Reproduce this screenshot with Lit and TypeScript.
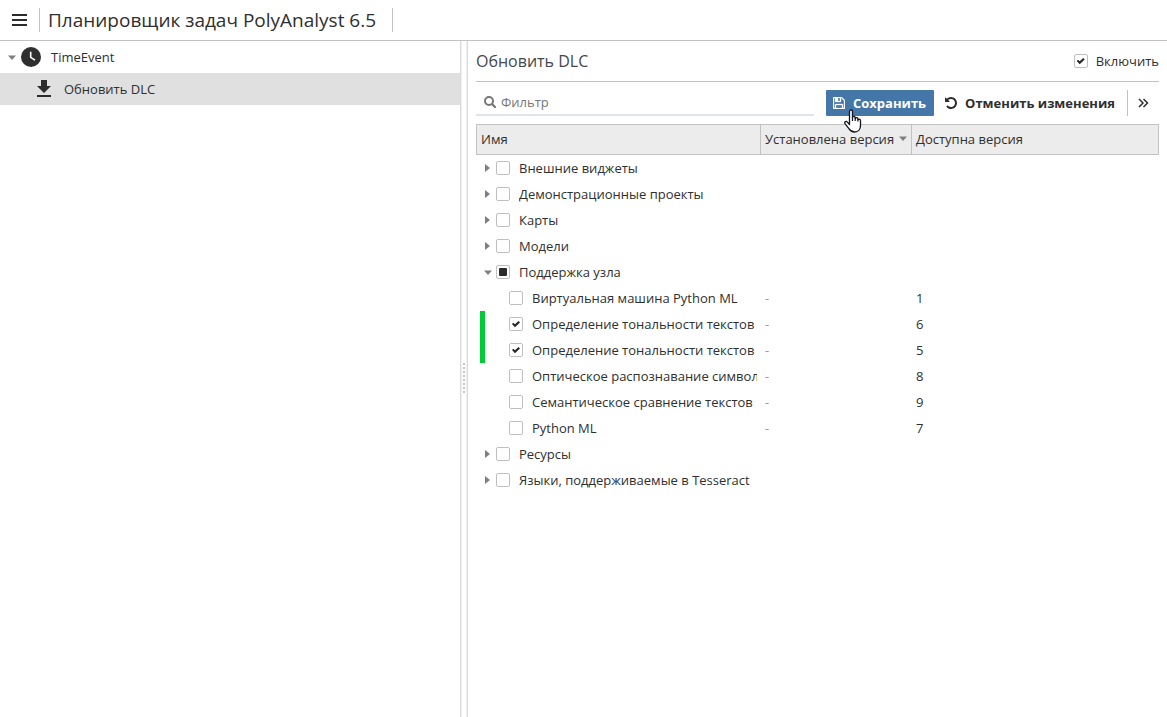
import { LitElement, css, html, svg, nothing } from "lit";
import { customElement, property, state } from "lit/decorators.js";

interface DlcRow {
  name: string;
  level: 0 | 1;
  open?: boolean;
  checked?: boolean;
  mixed?: boolean;
  changed?: boolean;
  available?: string;
}

const ROWS: DlcRow[] = [
  { name: "Внешние виджеты", level: 0 },
  { name: "Демонстрационные проекты", level: 0 },
  { name: "Карты", level: 0 },
  { name: "Модели", level: 0 },
  { name: "Поддержка узла", level: 0, open: true, mixed: true },
  { name: "Виртуальная машина Python ML", level: 1, available: "1" },
  { name: "Определение тональности текстов", level: 1, checked: true, changed: true, available: "6" },
  { name: "Определение тональности текстов", level: 1, checked: true, changed: true, available: "5" },
  { name: "Оптическое распознавание символов", level: 1, available: "8" },
  { name: "Семантическое сравнение текстов", level: 1, available: "9" },
  { name: "Python ML", level: 1, available: "7" },
  { name: "Ресурсы", level: 0 },
  { name: "Языки, поддерживаемые в Tesseract", level: 0 },
];

const shared = css`
  * {
    box-sizing: border-box;
  }
  button {
    font: inherit;
    color: inherit;
    background: none;
    border: 0;
    padding: 0;
    cursor: pointer;
  }
  svg {
    display: block;
    flex: none;
  }
  .check {
    appearance: none;
    flex: none;
    display: grid;
    place-items: center;
    width: 14px;
    height: 14px;
    margin: 0;
    border: 1px solid #bfbfbf;
    border-radius: 2px;
    background: #fff;
  }
  .check::before {
    content: "";
    width: 8px;
    height: 8px;
  }
  .check:checked::before {
    background: #262626;
    clip-path: polygon(0 50%, 16% 34%, 37% 53%, 82% 14%, 100% 31%, 37% 90%);
  }
  .check:indeterminate::before {
    background: #2b2b2b;
    border-radius: 1px;
  }
`;

/** Small grey triangle used by trees and the sort mark. */
const triangle = (open: boolean) =>
  open
    ? svg`<svg width="8" height="5" viewBox="0 0 8 5"><path d="M0 .5h8L4 5z" fill="#7d7f85"/></svg>`
    : svg`<svg width="5" height="8" viewBox="0 0 5 8"><path d="M0 0v8l5-4z" fill="#7d7f85"/></svg>`;

@customElement("dlc-table")
export class DlcTable extends LitElement {
  static styles = [
    shared,
    css`
      :host {
        display: block;
      }
      .table {
        width: 100%;
        border-collapse: separate;
        border-spacing: 0;
        table-layout: fixed;
      }
      .name-col {
        width: 285px;
      }
      .version-col {
        width: 151px;
      }
      .head {
        height: 31px;
        padding: 0 4px 2px;
        text-align: left;
        font-weight: 400;
        white-space: nowrap;
        background: #ececec;
        border: 1px solid #c2c2c2;
        border-left: 0;
      }
      .head:first-child {
        border-left: 1px solid #c2c2c2;
      }
      .head-label {
        display: flex;
        align-items: center;
        justify-content: space-between;
      }
      .cell {
        height: 26px;
        padding: 0 4px;
      }
      .none {
        color: #9a9a9a;
      }
      .item {
        display: flex;
        align-items: center;
        height: 26px;
        border-left: 5px solid transparent;
      }
      .item.changed {
        border-color: #00cc33;
      }
      .toggle {
        flex: none;
        width: 11px;
        height: 16px;
        display: flex;
        align-items: center;
      }
      .toggle.open {
        width: 12px;
        margin-left: -1px;
      }
      .indent {
        flex: none;
        width: 24px;
      }
      .text {
        flex: 1;
        min-width: 0;
        margin-left: 9px;
        overflow: hidden;
        white-space: nowrap;
      }
    `,
  ];

  @property({ attribute: false }) rows: DlcRow[] = [];

  private renderRow(row: DlcRow, index: number) {
    const id = `row-${index}`;
    return html`
      <tr>
        <td class="cell">
          <div class="item ${row.changed ? "changed" : ""}">
            ${row.level === 0
              ? html`<button
                  class="toggle ${row.open ? "open" : ""}"
                  aria-label=${row.name}
                  aria-expanded=${row.open ? "true" : "false"}
                >
                  ${triangle(!!row.open)}
                </button>`
              : html`<span class="indent"></span>`}
            <input
              class="check"
              type="checkbox"
              id=${id}
              .checked=${!!row.checked}
              .indeterminate=${!!row.mixed}
            />
            <label class="text" for=${id}>${row.name}</label>
          </div>
        </td>
        <td class="cell none">${row.available ? "-" : nothing}</td>
        <td class="cell">${row.available ?? nothing}</td>
      </tr>
    `;
  }

  render() {
    return html`
      <table class="table">
        <colgroup>
          <col class="name-col" />
          <col class="version-col" />
          <col />
        </colgroup>
        <thead>
          <tr>
            <th class="head">Имя</th>
            <th class="head">
              <span class="head-label">Установлена версия ${triangle(true)}</span>
            </th>
            <th class="head">Доступна версия</th>
          </tr>
        </thead>
        <tbody>
          ${this.rows.map((row, i) => this.renderRow(row, i))}
        </tbody>
      </table>
    `;
  }
}

@customElement("app-root")
export class AppRoot extends LitElement {
  static styles = [
    shared,
    css`
      :host {
        display: flex;
        flex-direction: column;
        height: 100vh;
        overflow: hidden;
        background: #fff;
        color: #2f2f2f;
        font: 13px/18px "Open Sans", "Noto Sans", sans-serif;
      }
      .topbar {
        display: flex;
        align-items: center;
        height: 41px;
        flex: none;
        padding-left: 12px;
        border-bottom: 1px solid #c2c2c2;
      }
      .app-title {
        margin: 0 0 0 12px;
        padding: 0 16px 0 8px;
        border: solid #c2c2c2;
        border-width: 0 1px;
        font-size: 19px;
        line-height: 24px;
        font-weight: 400;
        white-space: nowrap;
      }
      .body {
        flex: 1;
        min-height: 0;
        display: flex;
      }
      .tree {
        flex: none;
        width: 460px;
      }
      .node {
        display: flex;
        align-items: center;
        width: 100%;
        height: 32px;
        padding-left: 8px;
        text-align: left;
      }
      .node.selected {
        background: #e0e0e0;
        padding-left: 36px;
      }
      .node-icon {
        margin: 0 10px 0 5px;
      }
      .node-icon.leaf {
        margin: 0 12px 0 0;
      }
      .splitter {
        flex: none;
        width: 8px;
        display: flex;
        align-items: center;
        justify-content: center;
        border: solid #d9d9d9;
        border-width: 0 1px;
        box-shadow: inset 1px 0 #f1f1f1, inset -1px 0 #f1f1f1;
      }
      .grip {
        width: 2px;
        height: 32px;
        background: repeating-linear-gradient(#c6c6c6 0 2px, transparent 2px 4px);
      }
      .panel {
        flex: 1;
        min-width: 0;
        padding: 0 8px;
      }
      .panel-head {
        display: flex;
        align-items: center;
        justify-content: space-between;
        height: 41px;
        border-bottom: 1px solid #c2c2c2;
      }
      .panel-title {
        margin: 0;
        font-size: 16px;
        line-height: 24px;
        font-weight: 400;
        color: #45474d;
      }
      .enable {
        display: flex;
        align-items: center;
        gap: 8px;
      }
      .toolbar {
        display: flex;
        align-items: center;
        height: 26px;
        margin: 8px 0;
      }
      .filter {
        flex: 1;
        min-width: 0;
        display: flex;
        align-items: center;
        gap: 5px;
        height: 26px;
        padding-left: 8px;
        margin-right: 12px;
        border-bottom: 2px solid #e0e4ec;
      }
      .filter-input {
        flex: 1;
        min-width: 0;
        border: 0;
        padding: 0;
        outline: 0;
        font: inherit;
        color: inherit;
        background: none;
      }
      .filter-input::placeholder {
        color: #777;
        opacity: 1;
      }
      .button {
        position: relative;
        display: flex;
        align-items: center;
        gap: 8px;
        height: 26px;
        padding: 0 8px;
        font-weight: 700;
        white-space: nowrap;
      }
      .button.primary {
        padding-left: 7px;
        margin-right: 3px;
        background: #4477a8;
        color: #fff;
        border-radius: 1px;
      }
      .pointer {
        position: absolute;
        left: 18px;
        top: 19px;
        z-index: 1;
      }
      .more {
        display: flex;
        align-items: center;
        height: 26px;
        margin-left: 4px;
        padding: 0 10px;
        border-left: 1px solid #c2c2c2;
      }
    `,
  ];

  @state() private filter = "";

  private get visibleRows() {
    const text = this.filter.toLowerCase();
    return ROWS.filter((row) => row.name.toLowerCase().includes(text));
  }

  private renderTree() {
    return html`
      <nav class="tree">
        <button class="node" aria-expanded="true">
          ${triangle(true)}
          <svg class="node-icon" width="20" height="20" viewBox="0 0 20 20">
            <circle cx="10" cy="10" r="10" fill="#2f2f2f" />
            <path d="M9.700 4.800v5.600l4.300 2.800" fill="none" stroke="#fff" stroke-width="1.600" />
          </svg>
          TimeEvent
        </button>
        <button class="node selected">
          <svg class="node-icon leaf" width="16" height="18" viewBox="0 0 16 18">
            <path d="M5 0h6v6h4L8 13 1 6h4zM1 15h14v2H1z" fill="#2b2b2b" />
          </svg>
          Обновить DLC
        </button>
      </nav>
    `;
  }

  private renderToolbar() {
    return html`
      <div class="toolbar">
        <label class="filter">
          <svg width="12" height="12" viewBox="0 0 12 12" fill="none" stroke="#777" stroke-linecap="round">
            <circle cx="5" cy="5" r="4" stroke-width="2" />
            <path d="M8.200 8.200L11 11" stroke-width="2.200" />
          </svg>
          <input
            class="filter-input"
            type="text"
            placeholder="Фильтр"
            aria-label="Фильтр"
            @input=${(e: Event) => (this.filter = (e.target as HTMLInputElement).value)}
          />
        </label>
        <button class="button primary">
          <svg width="12" height="12" viewBox="128 128 1536 1536" fill="#fff" stroke="#fff" stroke-width="40">
            <path
              d="M512 1536h768v-384h-768v384zm896 0h128v-896q0-14-10-38.500t-20-34.500l-281-281q-10-10-34-20t-39-10v416q0 40-28 68t-68 28h-576q-40 0-68-28t-28-68v-416h-128v1280h128v-416q0-40 28-68t68-28h832q40 0 68 28t28 68v416zm-384-928v-320q0-13-9.500-22.500t-22.500-9.500h-192q-13 0-22.500 9.500t-9.500 22.500v320q0 13 9.500 22.500t22.500 9.500h192q13 0 22.500-9.500t9.500-22.500zm640 32v928q0 40-28 68t-68 28h-1344q-40 0-68-28t-28-68v-1344q0-40 28-68t68-28h928q40 0 88 20t76 48l280 280q28 28 48 76t20 88z"
            />
          </svg>
          Сохранить
          <svg class="pointer" width="18" height="24" viewBox="0 0 18 24">
            <path
              d="M5.500 15.500V2.500c0-2 3-2 3 0v6c0-1.500 2.700-1.400 2.700.3v.7c.3-1.300 2.700-1.200 2.700.5v.8c.4-1.100 2.600-.9 2.600.8v4.900c0 3.700-2.200 6.500-6 6.500-3 0-4.400-1.300-5.600-3.300L1 14.600c-1-1.800 1.200-3 2.400-1.500z"
              fill="#fff"
              stroke="#14151f"
              stroke-width="1.300"
              stroke-linejoin="round"
            />
            <path d="M8.500 8v4M11.200 9v3M13.900 10v2.500" stroke="#14151f" stroke-width="1.200" />
          </svg>
        </button>
        <button class="button">
          <svg width="12" height="12" viewBox="128 128 1536 1536" fill="#2b2b2b">
            <path
              d="M1664 896q0 156-61 298t-164 245-245 164-298 61q-172 0-327-72.500t-264-204.500q-7-10-6.500-22.500t8.500-20.500l137-138q10-9 25-9 16 2 23 12 73 95 179 147t225 52q104 0 198.500-40.500t163.500-109.500 109.500-163.500 40.500-198.500-40.500-198.500-109.500-163.500-163.500-109.500-198.500-40.500q-98 0-188 35.500t-160 101.500l137 138q31 30 14 69-17 40-59 40h-448q-26 0-45-19t-19-45v-448q0-42 40-59 39-17 69 14l130 129q107-101 244.500-156.500t284.500-55.500q156 0 298 61t245 164 164 245 61 298z"
            />
          </svg>
          Отменить изменения
        </button>
        <button class="more" aria-label="Ещё">
          <svg width="11" height="10" viewBox="0 0 11 10" fill="none" stroke="#2f2f2f" stroke-width="1.500">
            <path d="M1 1l4 4-4 4M5.500 1l4 4-4 4" />
          </svg>
        </button>
      </div>
    `;
  }

  render() {
    return html`
      <header class="topbar">
        <button aria-label="Меню">
          <svg width="15" height="12" viewBox="0 0 15 12">
            <path d="M0 0h15v2H0zM0 5h15v2H0zM0 10h15v2H0z" fill="#2b2b2b" />
          </svg>
        </button>
        <h1 class="app-title">Планировщик задач PolyAnalyst 6.5</h1>
      </header>
      <div class="body">
        ${this.renderTree()}
        <div class="splitter" role="separator"><span class="grip"></span></div>
        <main class="panel">
          <div class="panel-head">
            <h2 class="panel-title">Обновить DLC</h2>
            <label class="enable">
              <input class="check" type="checkbox" .checked=${true} />
              Включить
            </label>
          </div>
          ${this.renderToolbar()}
          <dlc-table .rows=${this.visibleRows}></dlc-table>
        </main>
      </div>
    `;
  }
}
